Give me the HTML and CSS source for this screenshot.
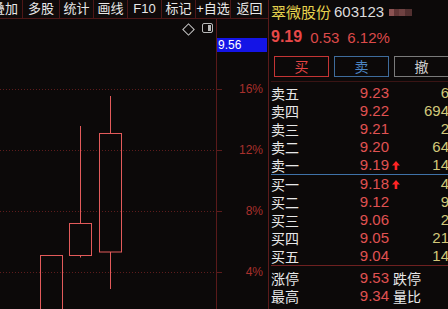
FILE: index.html
```html
<!DOCTYPE html>
<html lang="zh-CN">
<head>
<meta charset="utf-8">
<title>翠微股份 603123</title>
<link rel="stylesheet" href="styles.css">
</head>
<body>
<div class="app">
  <div class="left">
    <div class="toolbar">
      <div class="tb first"><span class="clip">叠加</span></div>
      <div class="tb w36">多股</div>
      <div class="tb">统计</div>
      <div class="tb">画线</div>
      <div class="tb">F10</div>
      <div class="tb">标记</div>
      <div class="tb w34">+自选</div>
      <div class="tb last">返回</div>
    </div>
    <div class="chart">
      <div class="plot">
        <svg class="kline" width="216" height="290" viewBox="0 0 216 290">
          <g class="grid">
            <line x1="0" y1="70.5" x2="216" y2="70.5"/>
            <line x1="0" y1="131.5" x2="216" y2="131.5"/>
            <line x1="0" y1="192.5" x2="216" y2="192.5"/>
            <line x1="0" y1="253.5" x2="216" y2="253.5"/>
          </g>
          <g class="candles">
            <rect x="40.5" y="236.5" width="22" height="80"/>
            <line x1="80.5" y1="107" x2="80.5" y2="204.5"/>
            <rect x="69.5" y="204.5" width="22" height="32"/>
            <line x1="80.5" y1="236.5" x2="80.5" y2="238.5"/>
            <line x1="110.5" y1="77" x2="110.5" y2="114.5"/>
            <rect x="99.5" y="114.5" width="22" height="118.5"/>
            <line x1="110.5" y1="233" x2="110.5" y2="270"/>
          </g>
        </svg>
        <span class="diamond"></span>
        <span class="panel-icon"></span>
      </div>
      <div class="axis">
        <div class="cur">9.56</div>
        <div class="tick t16"><i></i><span>16%</span></div>
        <div class="tick t12"><i></i><span>12%</span></div>
        <div class="tick t8"><i></i><span>8%</span></div>
        <div class="tick t4"><i></i><span>4%</span></div>
      </div>
    </div>
  </div>

  <div class="quote">
    <div class="title">
      <span class="name">翠微股份</span>
      <span class="code">603123</span>
      <span class="blur"></span>
    </div>
    <div class="price-row">
      <span class="last-price">9.19</span>
      <span class="chg">0.53</span>
      <span class="chg">6.12%</span>
    </div>
    <div class="btns">
      <div class="btn buy">买</div>
      <div class="btn sell">卖</div>
      <div class="btn cancel">撤</div>
    </div>
    <div class="book asks">
      <div class="row"><span class="lbl">卖五</span><span class="px">9.23</span><span class="ar"></span><span class="vol">6</span></div>
      <div class="row"><span class="lbl">卖四</span><span class="px">9.22</span><span class="ar"></span><span class="vol">694</span></div>
      <div class="row"><span class="lbl">卖三</span><span class="px">9.21</span><span class="ar"></span><span class="vol">2</span></div>
      <div class="row"><span class="lbl">卖二</span><span class="px">9.20</span><span class="ar"></span><span class="vol">64</span></div>
      <div class="row"><span class="lbl">卖一</span><span class="px">9.19</span><span class="ar"><svg width="8" height="9" viewBox="0 0 8 9"><path d="M4 0 L8 4.5 L5.3 4.5 L5.3 9 L2.7 9 L2.7 4.5 L0 4.5 Z"/></svg></span><span class="vol">14</span></div>
    </div>
    <div class="book bids">
      <div class="row"><span class="lbl">买一</span><span class="px">9.18</span><span class="ar"><svg width="8" height="9" viewBox="0 0 8 9"><path d="M4 0 L8 4.5 L5.3 4.5 L5.3 9 L2.7 9 L2.7 4.5 L0 4.5 Z"/></svg></span><span class="vol">4</span></div>
      <div class="row"><span class="lbl">买二</span><span class="px">9.12</span><span class="ar"></span><span class="vol">9</span></div>
      <div class="row"><span class="lbl">买三</span><span class="px">9.06</span><span class="ar"></span><span class="vol">2</span></div>
      <div class="row"><span class="lbl">买四</span><span class="px">9.05</span><span class="ar"></span><span class="vol">21</span></div>
      <div class="row"><span class="lbl">买五</span><span class="px">9.04</span><span class="ar"></span><span class="vol">14</span></div>
    </div>
    <div class="book stats">
      <div class="row"><span class="lbl">涨停</span><span class="px">9.53</span><span class="extra">跌停</span></div>
      <div class="row"><span class="lbl">最高</span><span class="px">9.34</span><span class="extra">量比</span></div>
    </div>
  </div>
</div>
</body>
</html>
```

FILE: styles.css
```css
html, body {
  margin: 0;
  padding: 0;
  width: 448px;
  height: 309px;
  overflow: hidden;
  background: #0c0909;
}

body {
  font-family: "Liberation Sans", "Noto Sans CJK SC", sans-serif;
  color: #e6e6e6;
}

.app {
  display: flex;
  width: 448px;
  height: 309px;
  overflow: hidden;
}

/* ---------- left: toolbar + chart ---------- */
.left {
  flex: 0 0 268px;
  width: 268px;
  border-right: 1px solid #5a1a1a;
  display: flex;
  flex-direction: column;
}

.toolbar {
  display: flex;
  height: 18px;
  border-bottom: 1px solid #4e1717;
  background: #0f0a0a;
}

.tb {
  width: 33px;
  flex: 0 0 auto;
  border-right: 1px solid #4e1717;
  font-size: 13px;
  line-height: 18px;
  text-align: center;
  white-space: nowrap;
  overflow: hidden;
  color: #e8e8e8;
}

.tb.first {
  position: relative;
  width: 22px;
}

.tb.first .clip {
  position: absolute;
  right: 4px;
  top: 0;
}

.tb.w36 { width: 36px; }
.tb.w34 { width: 34px; }
.tb.last { width: 37px; border-right: none; }

.chart {
  flex: 1;
  display: flex;
}

.plot {
  position: relative;
  width: 216px;
  flex: 0 0 216px;
  border-right: 1px solid #5a1a1a;
  overflow: hidden;
}

.kline {
  display: block;
}

.grid line {
  stroke: #5e1c1c;
  stroke-width: 1;
  stroke-dasharray: 1 2;
}

.candles rect,
.candles line {
  fill: none;
  stroke: #e25a5a;
  stroke-width: 1;
}

.diamond {
  position: absolute;
  left: 184px;
  top: 6px;
  width: 7px;
  height: 7px;
  border: 1px solid #c8c8c8;
  transform: rotate(45deg);
}

.panel-icon {
  position: absolute;
  left: 202px;
  top: 4px;
  width: 9px;
  height: 8px;
  border: 1px solid #b8b8b8;
  border-radius: 2px;
  background: linear-gradient(to right, transparent 0 55%, #b8b8b8 55% 100%);
  box-shadow: inset 0 0 0 1px #0c0909;
}

.axis {
  position: relative;
  flex: 0 0 51px;
  width: 51px;
}

.cur {
  position: absolute;
  left: 0;
  top: 19px;
  width: 50px;
  height: 14px;
  background: #1414e6;
  color: #ffffff;
  font-size: 12px;
  line-height: 14px;
  padding-left: 1px;
  box-sizing: border-box;
}

.tick {
  position: absolute;
  left: 0;
  width: 46px;
  height: 14px;
  display: flex;
  align-items: center;
  justify-content: space-between;
}

.tick i {
  display: block;
  width: 5px;
  height: 1px;
  background: #5e1c1c;
}

.tick span {
  font-size: 12px;
  line-height: 14px;
  color: #a8302c;
}

.t16 { top: 63px; }
.t12 { top: 124px; }
.t8  { top: 185px; }
.t4  { top: 246px; }

/* ---------- right: quote panel ---------- */
.quote {
  flex: 0 0 180px;
  width: 180px;
  box-sizing: border-box;
  padding-left: 2px;
  display: flex;
  flex-direction: column;
}

.title {
  height: 24px;
  display: flex;
  align-items: center;
  white-space: nowrap;
}

.name {
  font-size: 15px;
  color: #e6d24e;
  font-family: "Noto Sans CJK SC", sans-serif;
  line-height: 24px;
}

.code {
  font-size: 15px;
  color: #dcdcdc;
  margin-left: 3px;
  line-height: 24px;
}

.blur {
  display: block;
  width: 23px;
  height: 7px;
  margin-left: 5px;
  margin-top: 1px;
  background: linear-gradient(to right, #9a5a5a 0 20%, #6a3a3a 20% 45%, #7a4848 45% 70%, #5a3434 70% 100%);
  opacity: 0.9;
}

.price-row {
  height: 26px;
  display: flex;
  align-items: center;
  gap: 8px;
  white-space: nowrap;
}

.last-price {
  font-size: 16px;
  font-weight: bold;
  color: #e84848;
}

.chg {
  font-size: 15px;
  color: #dc4a4a;
}

.btns {
  display: flex;
  gap: 5px;
  margin-top: 6px;
  padding-left: 3px;
  height: 21px;
}

.btn {
  flex: 0 0 55px;
  box-sizing: border-box;
  height: 21px;
  border: 1px solid;
  font-family: "Noto Sans CJK SC", sans-serif;
  font-size: 14px;
  line-height: 19px;
  text-align: center;
}

.btn.buy { border-color: #c43434; color: #e04444; }
.btn.sell { border-color: #3e6c9c; color: #4c86c4; }
.btn.cancel { border-color: #7a7a7a; color: #d0d0d0; }

.book {
  display: flex;
  flex-direction: column;
}

.asks {
  margin-top: 4px;
  border-top: 1px solid #3a1414;
  padding-top: 2px;
}

.bids {
  border-top: 1px solid #3f72a8;
}

.stats {
  border-top: 1px solid #6e2020;
  padding-top: 3px;
}

.row {
  display: grid;
  grid-template-columns: 40px 78px 12px 48px;
  height: 18px;
  align-items: center;
  font-size: 14px;
  line-height: 18px;
  white-space: nowrap;
}

.lbl {
  color: #e8e8e8;
  font-family: "Noto Sans CJK SC", sans-serif;
}

.px {
  text-align: right;
  color: #e05252;
  font-size: 15px;
}

.ar {
  display: flex;
  align-items: center;
  padding-left: 3px;
}

.ar svg {
  display: block;
  fill: #ff2424;
}

.vol {
  text-align: right;
  color: #d2c87a;
  font-size: 15px;
}

.extra {
  grid-column: 3 / 5;
  padding-left: 4px;
  color: #e8e8e8;
  font-family: "Noto Sans CJK SC", sans-serif;
}
```
